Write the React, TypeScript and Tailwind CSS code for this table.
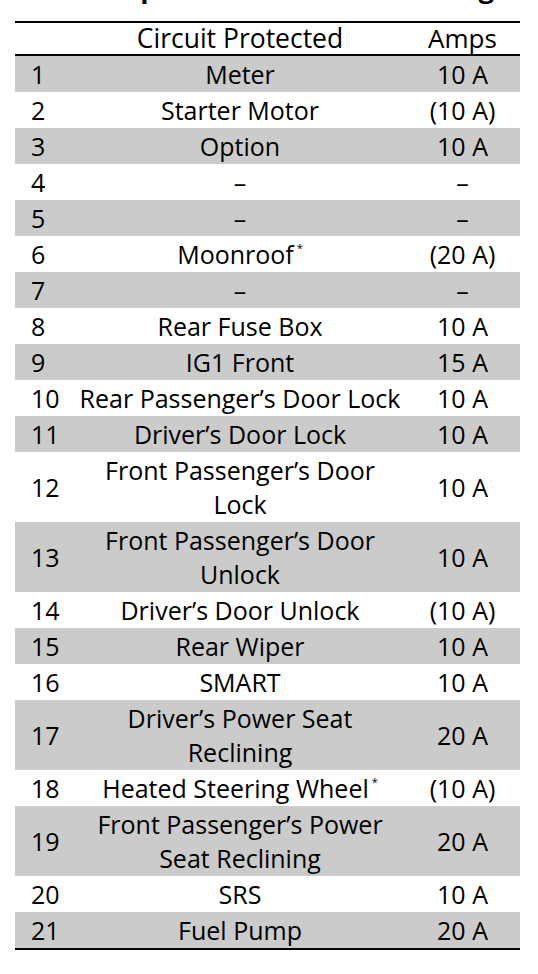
import React from "react";

type Row = {
  no: number;
  circuit: React.ReactNode;
  amps: string;
};

const Star = () => (
  <sup className="relative -top-[3px] ml-[3px] text-[11px] align-super">*</sup>
);

const rows: Row[] = [
  { no: 1, circuit: "Meter", amps: "10 A" },
  { no: 2, circuit: "Starter Motor", amps: "(10 A)" },
  { no: 3, circuit: "Option", amps: "10 A" },
  { no: 4, circuit: "–", amps: "–" },
  { no: 5, circuit: "–", amps: "–" },
  { no: 6, circuit: <>Moonroof<Star /></>, amps: "(20 A)" },
  { no: 7, circuit: "–", amps: "–" },
  { no: 8, circuit: "Rear Fuse Box", amps: "10 A" },
  { no: 9, circuit: "IG1 Front", amps: "15 A" },
  { no: 10, circuit: "Rear Passenger’s Door Lock", amps: "10 A" },
  { no: 11, circuit: "Driver’s Door Lock", amps: "10 A" },
  { no: 12, circuit: <>Front Passenger’s Door<br />Lock</>, amps: "10 A" },
  { no: 13, circuit: <>Front Passenger’s Door<br />Unlock</>, amps: "10 A" },
  { no: 14, circuit: "Driver’s Door Unlock", amps: "(10 A)" },
  { no: 15, circuit: "Rear Wiper", amps: "10 A" },
  { no: 16, circuit: "SMART", amps: "10 A" },
  { no: 17, circuit: <>Driver’s Power Seat<br />Reclining</>, amps: "20 A" },
  { no: 18, circuit: <>Heated Steering Wheel<Star /></>, amps: "(10 A)" },
  { no: 19, circuit: <>Front Passenger’s Power<br />Seat Reclining</>, amps: "20 A" },
  { no: 20, circuit: "SRS", amps: "10 A" },
  { no: 21, circuit: "Fuel Pump", amps: "20 A" },
];

export default function App() {
  return (
    <div
      className="w-[538px] min-h-[974px] bg-white text-black"
      style={{ fontFamily: '"Open Sans", "Noto Sans", sans-serif' }}
    >
      {/* title, cut off at the top edge of the page */}
      <div className="h-[21px] overflow-hidden">
        <div className="-mt-[27px] pl-[44px] text-[27px] font-bold leading-[30px] whitespace-nowrap">
          Circuit protected and Fuse Rating
        </div>
      </div>

      <table className="ml-[15px] w-[505px] border-collapse table-fixed text-[25px] font-[380]">
        <colgroup>
          <col className="w-[60px]" />
          <col className="w-[330px]" />
          <col className="w-[115px]" />
        </colgroup>
        <thead>
          <tr className="border-t-2 border-b-2 border-black">
            <th className="h-[33px] p-0 font-normal leading-[31px]"></th>
            <th className="p-0 text-center text-[26.5px] font-[380] leading-[31px]">Circuit Protected</th>
            <th className="p-0 text-center text-[26px] font-[380] leading-[31px]">Amps</th>
          </tr>
        </thead>
        <tbody className="border-b-2 border-black">
          {rows.map((r, i) => (
            <tr key={r.no} className={i % 2 === 0 ? "bg-[#cbcbcb]" : "bg-white"}>
              <td className="py-px pl-[16px] pr-0 text-left leading-[34px] align-middle">{r.no}</td>
              <td className="py-px px-0 text-center leading-[34px] whitespace-nowrap align-middle">{r.circuit}</td>
              <td className="py-px px-0 text-center leading-[34px] align-middle">{r.amps}</td>
            </tr>
          ))}
        </tbody>
      </table>
    </div>
  );
}
